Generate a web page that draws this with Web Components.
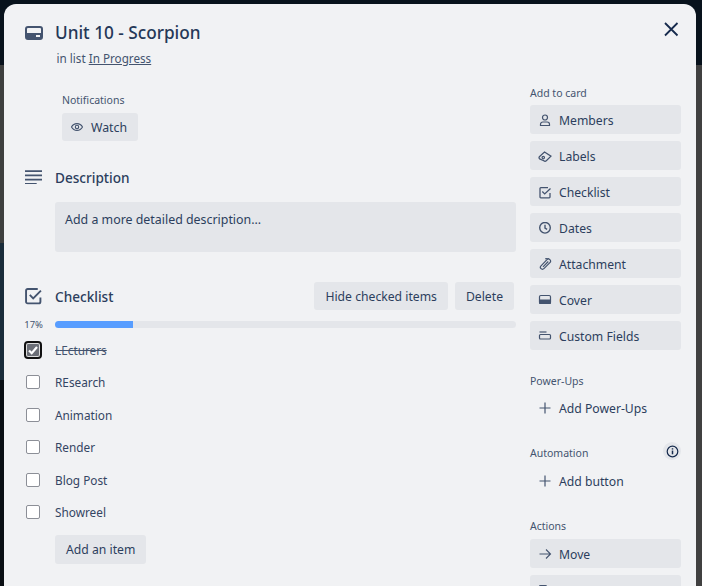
<!DOCTYPE html>
<html>
<head>
<meta charset="utf-8">
<title>Unit 10 - Scorpion</title>
<style>
    html, body { margin: 0; height: 100%; overflow: hidden; }
    body {
        /* El fondo oscurecido del tablero que asoma alrededor de la tarjeta */
        background:
            linear-gradient(#08121c 0, #08121c 65px, #404040 65px) right top / 6px 100% no-repeat,
            linear-gradient(#08121c 0, #08121c 65px, #3e3f3e 65px, #3e3f3e 243px, #1a2c3a 243px, #1a2c3a 380px, #0a0f14 380px) left top / 50% 100% no-repeat,
            linear-gradient(#08121c 0, #08121c 65px, #404040 65px) right top / 50% 100% no-repeat;
        font-family: "Noto Sans", sans-serif;
        color: #172b4d;
    }
</style>
</head>
<body>
<card-window></card-window>

<template id="side-button-tpl">
    <style>
        :host { display: flex; align-items: center; height: 29px; box-sizing: border-box; padding: 2px 0 0 8px; border-radius: 3px; background: #e4e6ea; color: #2c3e5d; font-size: 12.2px; margin-bottom: 7px; }
        :host([plain]) { background: transparent; }
        .ico { width: 14px; height: 14px; margin-right: 7px; display: flex; color: #44546f; }
    </style>
    <span class="ico"></span><slot></slot>
</template>

<script>
// Iconos usados por la tarjeta
const icons = {
    card: '<svg viewBox="0 0 18 14" fill="none"><rect x="1" y="1" width="16" height="12" rx="2" stroke="currentColor" stroke-width="2"/><rect x="1" y="7" width="16" height="6" rx="1" fill="currentColor"/><rect x="11" y="9" width="4" height="2" fill="#f1f2f4"/></svg>',
    lines: '<svg viewBox="0 0 16 14" fill="none" stroke="currentColor" stroke-width="1.6"><path d="M0 1h16M0 5h16M0 9h16M0 13h11"/></svg>',
    check: '<svg viewBox="0 0 16 16" fill="none" stroke="currentColor" stroke-width="1.8"><path d="M14.5 9v4a1.5 1.5 0 0 1-1.5 1.5H2.5A1.5 1.5 0 0 1 1 13V2.500A1.500 1.500 0 0 1 2.500 1H12"/><path d="M4.500 6.500l3.200 3.200L15 2.500"/></svg>',
    eye: '<svg viewBox="0 0 14 14" fill="none" stroke="currentColor" stroke-width="1.100"><path d="M1.500 7c1.200-2.300 3-3.400 5.500-3.400S11.300 4.700 12.500 7c-1.200 2.300-3 3.400-5.500 3.400S2.700 9.300 1.500 7z"/><circle cx="7" cy="7" r="1.700"/></svg>',
    person: '<svg viewBox="0 0 14 14" fill="none" stroke="currentColor" stroke-width="1.200"><circle cx="7" cy="3.500" r="2.500"/><path d="M2.500 11.500v-1.300c0-1.300 1-2.200 2.300-2.200h4.400c1.300 0 2.300.9 2.300 2.200v1.300z"/></svg>',
    label: '<svg viewBox="0 0 14 14" fill="none" stroke="currentColor" stroke-width="1.200"><path d="M1.600 6.500L6.500 2l6.500 4.200-4.700 4.600a1.800 1.800 0 0 1-2.500 0L1.600 8.900a1.700 1.700 0 0 1 0-2.400z"/><circle cx="5.300" cy="7.600" r="1.200"/></svg>',
    box: '<svg viewBox="0 0 14 14" fill="none" stroke="currentColor" stroke-width="1.300"><path d="M12 7v4a.8.8 0 0 1-.8.8H2.800a.8.8 0 0 1-.8-.8V2.500a.8.8 0 0 1 .8-.8H10"/><path d="M4.300 5.500l2.400 2.400L12.500 2.500"/></svg>',
    clock: '<svg viewBox="0 0 14 14" fill="none" stroke="currentColor" stroke-width="1.400"><circle cx="7" cy="5.800" r="5.300"/><path d="M7 2.800v3.400l2.100 1.200"/></svg>',
    clip: '<svg viewBox="0 0 14 14" fill="none" stroke="currentColor" stroke-width="1.200"><path d="M9 1.700L3 7.800a2 2 0 0 0 2.900 2.900l6-6.100a2 2 0 0 0-2.900-2.900"/><path d="M10.300 3.500L5 8.900"/><path d="M7.500 1.200a2 2 0 0 1 3.200-.6"/></svg>',
    cover: '<svg viewBox="0 0 14 14"><rect x="1.500" y="1.500" width="11" height="8" rx="1.300" fill="none" stroke="currentColor" stroke-width="1.200"/><rect x="1" y="5.500" width="12" height="4.500" rx="1" fill="currentColor"/></svg>',
    fields: '<svg viewBox="0 0 14 14" fill="none" stroke="currentColor" stroke-width="1.200"><path d="M1.500 2h7"/><rect x="1.500" y="4.500" width="11" height="4.500" rx="1"/></svg>',
    plus: '<svg viewBox="0 0 14 14" fill="none" stroke="currentColor" stroke-width="1.200"><path d="M7 .5v11M1.500 6h11"/></svg>',
    arrow: '<svg viewBox="0 0 14 14" fill="none" stroke="currentColor" stroke-width="1.100"><path d="M1.500 6h10.500M8 1.500L12.500 6 8 10.500"/></svg>',
    copy: '<svg viewBox="0 0 14 14" fill="none" stroke="currentColor" stroke-width="1.200"><rect x="1.500" y="1.500" width="7" height="9" rx="1"/><path d="M11 3.500h1v9H5v-1"/></svg>'
};

class SideButton extends HTMLElement {
    constructor() {
        super();
        this.attachShadow({ mode: 'open' });
        this.shadowRoot.appendChild(document.getElementById('side-button-tpl').content.cloneNode(true));
        this.shadowRoot.querySelector('.ico').innerHTML = icons[this.getAttribute('icon')] || '';
        const svg = this.shadowRoot.querySelector('svg');
        if (svg) { svg.style.width = '14px'; svg.style.height = '14px'; }
    }
}
customElements.define('side-button', SideButton);

class SectionLabel extends HTMLElement {
    constructor() {
        super();
        this.attachShadow({ mode: 'open' });
        this.shadowRoot.innerHTML = `
            <style>
                :host { display: block; font-size: 10.5px; line-height: 16px; color: #44546f; }
            </style>
            <slot></slot>`;
    }
}
customElements.define('section-label', SectionLabel);

class CheckItem extends HTMLElement {
    constructor() {
        super();
        this.attachShadow({ mode: 'open' });
        const done = this.hasAttribute('done');
        this.shadowRoot.innerHTML = `
            <style>
                :host { display: flex; align-items: center; height: 32.4px; font-size: 11.8px; color: #344563; }
                .box { width: 14px; height: 14px; box-sizing: border-box; margin-left: 22px; margin-right: 15px; background: #fff; border: 1px solid #8c8f97; border-radius: 2px; flex: none; }
                .box.done { background: #6b6e76; outline: 2px solid #111; border: 1px solid #ddd; display: flex; }
                .txt.done { text-decoration: line-through; color: #44546f; }
            </style>
            <span class="box ${done ? 'done' : ''}">${done ? '<svg viewBox="0 0 12 12" width="12" height="12" fill="none" stroke="#fff" stroke-width="2.200"><path d="M2 6.500l2.700 2.700L10 3"/></svg>' : ''}</span>
            <span class="txt ${done ? 'done' : ''}"><slot></slot></span>`;
    }
}
customElements.define('check-item', CheckItem);

class CardWindow extends HTMLElement {
    constructor() {
        super();
        this.attachShadow({ mode: 'open' });
        this.shadowRoot.innerHTML = `
            <style>
                :host { display: block; box-sizing: border-box; margin: 4px 6px 0 4px; height: 582px; background: #f1f2f4; border-radius: 12px 12px 0 0; overflow: hidden; position: relative; }
                .layout { display: grid; grid-template-columns: 512px 151px; column-gap: 14px; }
                .main { padding-top: 17px; }
                .head { display: flex; align-items: flex-start; padding-left: 21px; }
                .head .ico { width: 18px; height: 14px; margin-top: 5px; margin-right: 12px; color: #44546f; display: flex; }
                h1 { margin: 0; font-size: 17.2px; line-height: 24px; font-weight: 500; color: #253858; }
                .sub { font-size: 11.7px; line-height: 18px; color: #44546f; margin: 4px 0 0 52.5px; }
                .sub u { text-underline-offset: 1px; }
                .notif { margin: 25px 0 0 58px; }
                .watch { display: inline-flex; align-items: center; height: 28px; padding: 0 11px 0 8px; background: #e4e6ea; border-radius: 3px; font-size: 12.3px; color: #2c3e5d; margin-top: 1px; }
                .watch .e { width: 14px; height: 14px; margin-right: 7px; color: #44546f; display: flex; }
                .sect { display: flex; align-items: center; padding-left: 21px; font-size: 13.6px; font-weight: 500; color: #2c3e5d; }
                .sect .ico { width: 17px; height: 16px; margin-right: 13px; color: #44546f; display: flex; align-items: center; }
                .desc-h { margin-top: 24px; height: 24px; }
                .desc { margin: 13px 0 0 51px; height: 50px; box-sizing: border-box; background: #e4e6ea; border-radius: 3px; padding: 10px 10px; font-size: 12.4px; line-height: 16px; color: #2c3e5d; }
                .check-h { margin-top: 28px; height: 32px; padding-right: 2px; }
                .check-h .grow { flex: 1; }
                .btn { display: inline-flex; align-items: center; height: 28px; padding: 0 11px; background: #e4e6ea; border-radius: 3px; font-size: 12.2px; font-weight: 400; color: #2c3e5d; margin-left: 7px; }
                .progress { display: flex; align-items: center; height: 14px; margin-top: 5px; font-size: 9.5px; color: #44546f; }
                .progress .pct { width: 51px; text-align: right; padding-right: 12px; box-sizing: border-box; }
                .bar { flex: 1; height: 7px; border-radius: 4px; background: #e4e6ea; overflow: hidden; }
                .bar i { display: block; width: 17%; height: 100%; background: #579dff; }
                .items { margin-top: 2.8px; }
                .add { margin: 7.2px 0 0 51px; }
                .add .btn { margin: 0; height: 29px; }
                .side { padding-top: 81px; }
                .gap { height: 16px; }
                .gap.short { height: 12px; }
                section-label { margin-bottom: 4px; }
                section-label.actions { margin-bottom: 5px; }
                .auto { display: flex; align-items: center; justify-content: space-between; margin-bottom: 5px; }
                .auto section-label { margin: 4px 0 0; }
                .info { width: 18px; height: 18px; border-radius: 50%; background: #e4e6ea; display: flex; align-items: center; justify-content: center; color: #172b4d; }
                .close { position: absolute; top: 16px; right: 16px; width: 18px; height: 18px; color: #172b4d; }
            </style>
            <svg class="close" viewBox="0 0 18 18" fill="none" stroke="currentColor" stroke-width="1.800"><path d="M3 3l12.500 12.500M15.500 3L3 15.500"/></svg>
            <div class="layout">
                <div class="main">
                    <div class="head"><span class="ico">${icons.card}</span><h1>Unit 10 - Scorpion</h1></div>
                    <div class="sub">in list <u>In Progress</u></div>
                    <div class="notif">
                        <section-label>Notifications</section-label>
                        <span class="watch"><span class="e">${icons.eye}</span>Watch</span>
                    </div>
                    <div class="sect desc-h"><span class="ico">${icons.lines}</span>Description</div>
                    <div class="desc">Add a more detailed description...</div>
                    <div class="sect check-h"><span class="ico">${icons.check}</span>Checklist<span class="grow"></span><span class="btn">Hide checked items</span><span class="btn">Delete</span></div>
                    <div class="progress"><span class="pct">17%</span><div class="bar"><i></i></div></div>
                    <div class="items">
                        <check-item done>LEcturers</check-item>
                        <check-item>REsearch</check-item>
                        <check-item>Animation</check-item>
                        <check-item>Render</check-item>
                        <check-item>Blog Post</check-item>
                        <check-item>Showreel</check-item>
                    </div>
                    <div class="add"><span class="btn">Add an item</span></div>
                </div>
                <div class="side">
                    <section-label>Add to card</section-label>
                    <side-button icon="person">Members</side-button>
                    <side-button icon="label">Labels</side-button>
                    <side-button icon="box">Checklist</side-button>
                    <side-button icon="clock">Dates</side-button>
                    <side-button icon="clip">Attachment</side-button>
                    <side-button icon="cover">Cover</side-button>
                    <side-button icon="fields">Custom Fields</side-button>
                    <div class="gap"></div>
                    <section-label>Power-Ups</section-label>
                    <side-button icon="plus" plain>Add Power-Ups</side-button>
                    <div class="gap short"></div>
                    <div class="auto"><section-label>Automation</section-label><span class="info"><svg viewBox="0 0 14 14" width="13" height="13" fill="none" stroke="currentColor" stroke-width="1.300"><circle cx="7" cy="7" r="5.700"/><path d="M7 6v4" stroke-width="1.600"/><path d="M7 3.500v1.400" stroke-width="1.600"/></svg></span></div>
                    <side-button icon="plus" plain>Add button</side-button>
                    <div class="gap"></div>
                    <section-label class="actions">Actions</section-label>
                    <side-button icon="arrow">Move</side-button>
                    <side-button icon="copy">Copy</side-button>
                </div>
            </div>`;
    }
}
customElements.define('card-window', CardWindow);
</script>
</body>
</html>
